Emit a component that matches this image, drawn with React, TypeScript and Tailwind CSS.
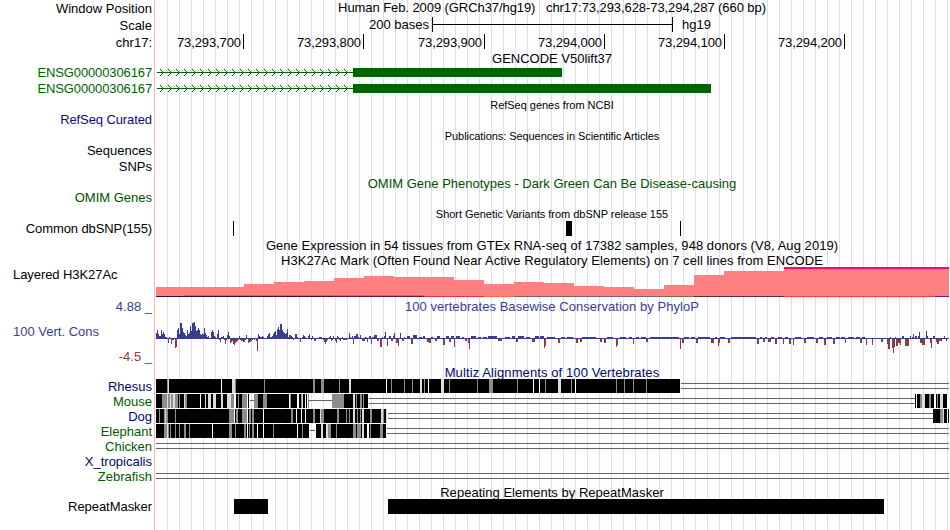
import type { ReactNode } from 'react';

type Stripe = [x: number, width: number, shade: string];

const K = '#000000';
const G = '#8c8c8c';
const L = '#dcdcdc';
const W = '#ffffff';

const signal = [
  6, 9, 5, 3, 3, 9, 5, 7, 5, 2, 2, 1, -4, 2, 1, -5, -1, -1, 1, -9, -8, 9, 11, 5, 16, 16, 11, 7, 6, 4, 3, 9, 5, 6,
  13, 8, 16, 16, 17, 13, 8, 9, 11, 9, 5, 4, 5, 5, 11, 6, 4, 2, 3, 1, 1, 7, 9, 7, 3, 2, 1, 5, 9, -1, -3, 2, 2, 3,
  -1, -5, -1, 4, 7, 3, -4, -3, -2, -5, -6, -4, -3, -2, -1, 3, -1, -2, -2, -3, -3, -1, 4, 1, -4, -3, -3,
  -2, -1, 1, -1, 1, -2, -12, 5, 3, 2, 2, 3, 2, 1, 1, 1, 3, 5, 6, 2, 2, 3, 5, 7, 8, 4, 10, 12, 9, 15, 15, 9, 7, 6, 5,
  6, 10, 2, 4, 4, 3, 2, -1, 1, 5, 5, 2, 1, 1, -3, 1, 2, 4, 3, 2, 1, 1, 3, 5, 1, -1, 3, 1, -2, -2, 1, 1, 1, 2, 2, 2,
  1, -1, -3, -5, -3, -1, 1, 2, 3, -2, -1, 3, 1, -2, -4, 3, 2, -1, -2, 1, 2, -1, -1, -1, -1, 1, 1, 6, 6, 3,
].slice(0, 194);

const later: [number, number, number][] = [
  [350, 1, 2], [352, 1, 3], [353, 1, -5], [354, 2, 3], [356, 2, 5], [358, 1, 2], [360, 1, 4], [362, 3, -2],
  [365, 2, 2], [367, 1, -3], [369, 2, 3], [371, 1, -5], [372, 2, 2], [374, 3, 4], [377, 2, -2], [380, 2, -8],
  [382, 1, 2], [384, 1, 3], [385, 1, 7], [387, 1, -7], [389, 2, 3], [391, 2, -2], [393, 1, 3], [394, 1, 6],
  [396, 2, -4], [398, 1, -7], [400, 1, 6], [402, 2, -2], [404, 1, 2], [407, 3, 3], [411, 2, -5], [413, 4, 4],
  [419, 3, 2], [423, 2, 3], [427, 2, -3], [429, 2, -4], [431, 2, 2], [435, 2, -2], [437, 3, 3], [443, 2, -6],
  [446, 3, 3], [449, 2, -3], [451, 3, 3], [454, 1, -8], [456, 4, 3], [462, 2, 2], [465, 2, -2], [468, 1, -4],
  [469, 1, -10], [471, 5, 3], [478, 3, 2], [483, 4, 2], [488, 9, 3], [498, 4, -2], [505, 5, 2], [512, 3, 3],
  [516, 2, -3], [518, 6, 3], [526, 4, 2], [532, 3, -3], [535, 4, 3], [540, 4, 3], [544, 1, -9], [545, 1, -7],
  [547, 8, 2], [558, 2, -4], [561, 4, 2], [567, 6, 2], [576, 2, -4], [580, 2, -3], [582, 14, 2], [600, 2, -3],
  [604, 2, -4], [607, 6, 2], [616, 1, -8], [617, 1, -6], [620, 6, 2], [629, 3, 2], [633, 1, -5], [636, 3, 2],
  [641, 5, 2], [646, 2, -3], [650, 29, 2], [680, 1, -10], [682, 2, -4], [684, 5, 2], [691, 4, 2], [696, 2, -4],
  [698, 12, 2], [711, 3, -4], [715, 2, 2], [718, 1, -7], [719, 1, -4], [720, 5, 2], [728, 2, -4], [731, 25, 2],
  [757, 2, -5], [760, 2, 2], [763, 2, -3], [765, 2, 2], [768, 3, -3], [771, 3, 2], [775, 2, -5], [778, 4, 2],
  [783, 1, -5], [785, 3, 2], [789, 2, -5], [793, 1, -6], [795, 6, 2], [804, 2, -4], [807, 7, 2], [816, 2, -4],
  [819, 4, 2], [824, 2, -6], [827, 5, 2], [833, 2, -5], [836, 4, 2], [841, 4, 2], [845, 1, -4], [848, 6, 2],
  [856, 4, 2], [860, 2, -4], [862, 3, 2], [866, 1, -6], [868, 3, 1], [872, 1, -6], [875, 6, 1], [881, 2, -3],
  [883, 4, 1], [887, 1, -5], [888, 2, -10], [890, 1, 2], [892, 1, -9], [893, 1, -14], [894, 1, -8], [895, 1, 2],
  [896, 2, -7], [898, 2, -4], [900, 1, -6], [902, 2, 3], [905, 4, -7], [910, 1, 3], [912, 1, 2], [913, 1, 5],
  [915, 2, 3], [918, 1, 3], [919, 1, 7], [920, 2, -4], [922, 3, -6], [926, 1, 8], [927, 1, 3], [929, 1, 1],
  [930, 2, -4], [931, 1, -9], [933, 2, 3], [936, 1, -3], [937, 2, -5], [939, 3, -2], [944, 1, 3], [946, 1, -2],
];

const steps: [number, number][] = [
  [156, 287], [244, 284], [274, 282], [304, 281], [334, 278], [364, 276], [394, 277], [454, 280], [484, 284],
  [514, 282], [544, 283], [574, 286], [604, 287], [634, 289], [664, 285], [694, 275], [724, 271], [784, 268],
  [949, 0],
];

const floor: Stripe[] = [
  [156, 88, '#38103c'], [244, 90, '#4c1030'], [334, 90, '#701040'], [424, 60, '#dc3250'], [484, 30, '#ff7040'],
  [514, 90, '#8c6058'], [604, 60, '#806070'], [664, 30, '#8c6440'], [694, 90, '#702838'], [784, 151, '#ff3838'],
  [935, 14, '#702080'],
];

const rhesus: Stripe[] = [
  [156, 524, K], [167, 1, G], [168, 1, L], [221, 1, W], [232, 3, L], [235, 1, G], [264, 1, G], [313, 2, G],
  [321, 3, G], [339, 1, G], [349, 2, L], [386, 1, W], [391, 1, G], [404, 1, G], [412, 1, G], [420, 2, L],
  [424, 1, G], [428, 1, W], [441, 3, L], [449, 1, G], [477, 1, G], [489, 4, G], [517, 1, G], [533, 1, W],
  [539, 1, W], [545, 1, G], [558, 3, L], [571, 1, G], [575, 1, W], [616, 1, G], [624, 1, G], [633, 1, G], [646, 1, G],
];
const mouse: Stripe[] = [
  [156, 93, K], [162, 5, G], [167, 1, L], [168, 2, G], [170, 1, L], [171, 2, G], [173, 2, L], [175, 3, G],
  [179, 1, G], [184, 1, L], [185, 2, G], [200, 1, W], [205, 1, L], [208, 3, L], [213, 3, L], [221, 2, L],
  [227, 4, L], [231, 3, G], [234, 2, W], [238, 1, G], [242, 5, G], [247, 1, W], [254, 55, K], [254, 4, G],
  [263, 4, G], [289, 1, W], [290, 1, G], [297, 2, W], [301, 1, G], [302, 1, L], [305, 1, W], [307, 1, W],
  [308, 1, G], [332, 36, K], [332, 12, G], [353, 2, L], [356, 1, G], [360, 2, G], [363, 1, G], [915, 34, K],
  [916, 1, W], [920, 2, G], [922, 3, L], [929, 2, G], [934, 2, W], [937, 1, G], [940, 3, L], [947, 2, W],
];
const dog: Stripe[] = [
  [156, 231, K], [159, 1, G], [164, 1, G], [165, 1, L], [166, 2, G], [175, 1, G], [229, 5, G], [234, 1, W],
  [236, 2, G], [242, 5, G], [247, 1, W], [249, 2, G], [252, 2, G], [263, 1, W], [291, 2, G], [296, 1, W],
  [301, 1, W], [305, 1, W], [313, 2, G], [320, 1, L], [321, 3, G], [337, 2, G], [346, 1, G], [349, 1, G],
  [353, 2, L], [357, 1, G], [360, 1, G], [362, 2, L], [370, 2, G], [381, 2, L], [383, 1, G], [386, 1, L],
  [933, 16, K], [940, 3, G], [943, 1, L], [947, 1, W],
];
const elephant: Stripe[] = [
  [156, 153, K], [164, 3, G], [167, 1, L], [168, 1, G], [170, 1, G], [175, 1, G], [179, 1, G], [184, 2, G],
  [189, 1, G], [212, 1, W], [229, 3, G], [235, 1, G], [244, 2, G], [247, 1, W], [249, 1, G], [252, 2, G],
  [257, 1, W], [263, 1, W], [273, 1, G], [297, 1, W], [302, 1, G], [316, 70, K], [321, 2, L], [326, 2, L],
  [328, 3, G], [336, 1, G], [353, 3, G], [357, 4, G], [362, 2, L], [367, 2, W], [370, 1, G], [380, 3, G],
];

const species: { name: string; top: number; tone: string; blocks: Stripe[]; dbl: [number, number][]; single: [number, number][] }[] = [
  { name: 'Rhesus', top: 379, tone: 'text-[#000a64]', blocks: rhesus, dbl: [[681, 949]], single: [] },
  { name: 'Mouse', top: 394, tone: 'text-[#005a00]', blocks: mouse, dbl: [[369, 915]], single: [[250, 254], [309, 332]] },
  { name: 'Dog', top: 409, tone: 'text-[#000a64]', blocks: dog, dbl: [[388, 933]], single: [] },
  { name: 'Elephant', top: 424, tone: 'text-[#005a00]', blocks: elephant, dbl: [[387, 949]], single: [[310, 315]] },
  { name: 'Chicken', top: 439, tone: 'text-[#005a00]', blocks: [], dbl: [[156, 949]], single: [] },
  { name: 'X_tropicalis', top: 454, tone: 'text-[#000a64]', blocks: [], dbl: [], single: [] },
  { name: 'Zebrafish', top: 469, tone: 'text-[#005a00]', blocks: [], dbl: [[156, 949]], single: [] },
];

/** Drawing surface of the data column; x and y are browser-wide coordinates. */
function Plot({ top, height, children }: { top: number; height: number; children: ReactNode }) {
  return (
    <svg className="block shrink-0" width={795} height={height} viewBox={`155 ${top} 795 ${height}`} shapeRendering="crispEdges">
      {children}
    </svg>
  );
}

function Row({ size, label, labelClass = '', children }: { size: string; label?: string; labelClass?: string; children?: ReactNode }) {
  return (
    <div className={`flex shrink-0 ${size}`}>
      <div className={`w-[155px] shrink-0 pr-[3px] text-right ${labelClass}`}>{label}</div>
      <div className="w-[794px] shrink-0">{children}</div>
    </div>
  );
}

function Title({ className = '', children }: { className?: string; children: ReactNode }) {
  return <div className={`text-center ${className}`}>{children}</div>;
}

function Gene({ top, end }: { top: number; end: number }) {
  const mid = top + 7;
  const arrows = Array.from({ length: 24 }, (_, i) => 163 + i * 8);
  return (
    <Plot top={top} height={16}>
      <rect x={157} y={mid} width={196} height={1} fill="#006400" />
      {arrows.map((x) => (
        <g key={x} fill="#006400">
          <rect x={x - 1} y={mid - 1} width={1} height={3} />
          <rect x={x - 2} y={mid - 2} width={1} height={1} />
          <rect x={x - 2} y={mid + 2} width={1} height={1} />
          <rect x={x - 3} y={mid - 3} width={1} height={1} />
          <rect x={x - 3} y={mid + 3} width={1} height={1} />
        </g>
      ))}
      <rect x={353} y={top + 3} width={end - 353} height={9} fill="#006400" />
    </Plot>
  );
}

function Tick({ width, children }: { width: string; children: string }) {
  return <div className={`h-[15px] border-r border-black pr-[2px] pt-px text-right tracking-[-0.1px] ${width}`}>{children}</div>;
}

export default function App() {
  return (
    <div className="h-[530px] w-[950px] overflow-hidden bg-white">
      <div className="flex h-full w-[949px] flex-col overflow-hidden whitespace-pre bg-[linear-gradient(to_right,#fff_154px,#ffb4b4_154px,#ffb4b4_155px,#fff_155px,#fff_156px,transparent_156px),repeating-linear-gradient(to_right,transparent_0px,transparent_11px,#dcdcff_11px,#dcdcff_12px)] font-['Liberation_Sans',Arial,sans-serif] text-[13px] leading-[15px] text-black">
        <Row size="h-[17px]" label="Window Position" labelClass="pt-px">
          <Title className="tracking-[-0.075px]">{'Human Feb. 2009 (GRCh37/hg19)   chr17:73,293,628-73,294,287 (660 bp)'}</Title>
        </Row>
        <Row size="h-[17px]" label="Scale" labelClass="pt-px">
          <div className="flex">
            <div className="w-[277px] pr-[3px] text-right">200 bases</div>
            <div className="flex h-[15px] w-[241px] items-center border-x border-black">
              <div className="h-px w-full bg-black" />
            </div>
            <div className="pl-[9px]">hg19</div>
          </div>
        </Row>
        <Row size="h-[17px]" label="chr17:" labelClass="pt-px">
          <div className="flex">
            <Tick width="w-[89px]">73,293,700</Tick>
            <Tick width="w-[120px]">73,293,800</Tick>
            <Tick width="w-[121px]">73,293,900</Tick>
            <Tick width="w-[120px]">73,294,000</Tick>
            <Tick width="w-[120px]">73,294,100</Tick>
            <Tick width="w-[120px]">73,294,200</Tick>
          </div>
        </Row>
        <Row size="h-[14px]"><Title>GENCODE V50lift37</Title></Row>
        <Row size="h-[16px]" label="ENSG00000306167" labelClass="text-[#006400] tracking-[-0.12px]"><Gene top={65} end={562} /></Row>
        <Row size="h-[16px]" label="ENSG00000306167" labelClass="text-[#006400] tracking-[-0.12px]"><Gene top={81} end={711} /></Row>
        <Row size="h-[15px]"><Title className="pt-px text-[11px] tracking-[-0.03px]">RefSeq genes from NCBI</Title></Row>
        <Row size="h-[17px]" label="RefSeq Curated" labelClass="text-[#0c0c78] tracking-[-0.1px]" />
        <Row size="h-[14px]"><Title className="text-[11px] tracking-[-0.07px]">Publications: Sequences in Scientific Articles</Title></Row>
        <Row size="h-[16px]" label="Sequences" />
        <Row size="h-[17px]" label="SNPs" />
        <Row size="h-[14px]"><Title className="text-[#005000]">OMIM Gene Phenotypes - Dark Green Can Be Disease-causing</Title></Row>
        <Row size="h-[17px]" label="OMIM Genes" labelClass="text-[#005000]" />
        <Row size="h-[14px]"><Title className="text-[11px] tracking-[-0.02px]">Short Genetic Variants from dbSNP release 155</Title></Row>
        <Row size="h-[17px]" label="Common dbSNP(155)" labelClass="tracking-[-0.1px]">
          <Plot top={221} height={17}>
            <rect x={233} y={221} width={1} height={15} />
            <rect x={566} y={221} width={6} height={15} />
            <rect x={680} y={221} width={1} height={15} />
          </Plot>
        </Row>
        <Row size="h-[15px]"><Title className="tracking-[0.055px]">Gene Expression in 54 tissues from GTEx RNA-seq of 17382 samples, 948 donors (V8, Aug 2019)</Title></Row>
        <Row size="h-[14px]"><Title className="tracking-[0.05px]">H3K27Ac Mark (Often Found Near Active Regulatory Elements) on 7 cell lines from ENCODE</Title></Row>
        <div className="flex h-[32px] shrink-0">
          <div className="w-[155px] shrink-0 pl-[13px] tracking-[-0.07px]">Layered H3K27Ac</div>
          <Plot top={267} height={32}>
            {steps.slice(0, -1).map(([x, y], i) => (
              <rect key={x} x={x} y={y} width={steps[i + 1][0] - x} height={297 - y} fill="#ff8080" />
            ))}
            {floor.map(([x, w, c]) => <rect key={x} x={x} y={296} width={w} height={1} fill={c} />)}
            <rect x={184} y={295} width={240} height={1} fill="#e06068" />
            <rect x={784} y={267} width={165} height={2} fill="#ff0080" />
          </Plot>
        </div>
        <div className="flex h-[66px] shrink-0">
          <div className="flex w-[155px] shrink-0 flex-col pr-[3px] text-right text-[#3c3c8c]">
            <div className="h-[25px]">4.88 _</div>
            <div className="h-[25px] pl-[13px] text-left">100 Vert. Cons</div>
            <div className="text-[#8c3c3c]">-4.5 _</div>
          </div>
          <div className="w-[794px] shrink-0">
            <Title className="text-[#3c3c8c] tracking-[0.04px]">100 vertebrates Basewise Conservation by PhyloP</Title>
            <Plot top={314} height={51}>
              <rect x={156} y={338} width={793} height={1} fill="#3c3c8c" />
              {signal.map((v, i) => (
                <rect key={i} x={156 + i} y={v > 0 ? 339 - v : 339} width={1} height={Math.abs(v)} fill={v > 0 ? '#3c3c8c' : '#8c3c3c'} />
              ))}
              {later.map(([x, w, v]) => (
                <rect key={x} x={x} y={v > 0 ? 339 - v : 339} width={w} height={Math.abs(v)} fill={v > 0 ? '#3c3c8c' : '#8c3c3c'} />
              ))}
            </Plot>
          </div>
        </div>
        <Row size="h-[14px]"><Title className="text-[#000a64] tracking-[0.1px]">Multiz Alignments of 100 Vertebrates</Title></Row>
        {species.map((s) => (
          <Row key={s.name} size="h-[15px]" label={s.name} labelClass={s.tone}>
            <Plot top={s.top} height={15}>
              {s.dbl.map(([a, b]) => (
                <g key={a} fill="#646464">
                  <rect x={a} y={s.top + 4} width={b - a} height={1} />
                  <rect x={a} y={s.top + 9} width={b - a} height={1} />
                </g>
              ))}
              {s.blocks.map(([x, w, c]) => <rect key={`${x}-${w}`} x={x} y={s.top} width={w} height={14} fill={c} />)}
              {s.single.map(([a, b]) => <rect key={a} x={a} y={s.top + 6} width={b - a} height={1} fill="#646464" />)}
            </Plot>
          </Row>
        ))}
        <Row size="h-[15px]"><Title className="pt-px tracking-[0.03px]">Repeating Elements by RepeatMasker</Title></Row>
        <Row size="h-[31px]" label="RepeatMasker" labelClass="tracking-[-0.05px]">
          <Plot top={499} height={31}>
            <rect x={234} y={499} width={34} height={15} />
            <rect x={388} y={499} width={496} height={15} />
          </Plot>
        </Row>
      </div>
    </div>
  );
}
